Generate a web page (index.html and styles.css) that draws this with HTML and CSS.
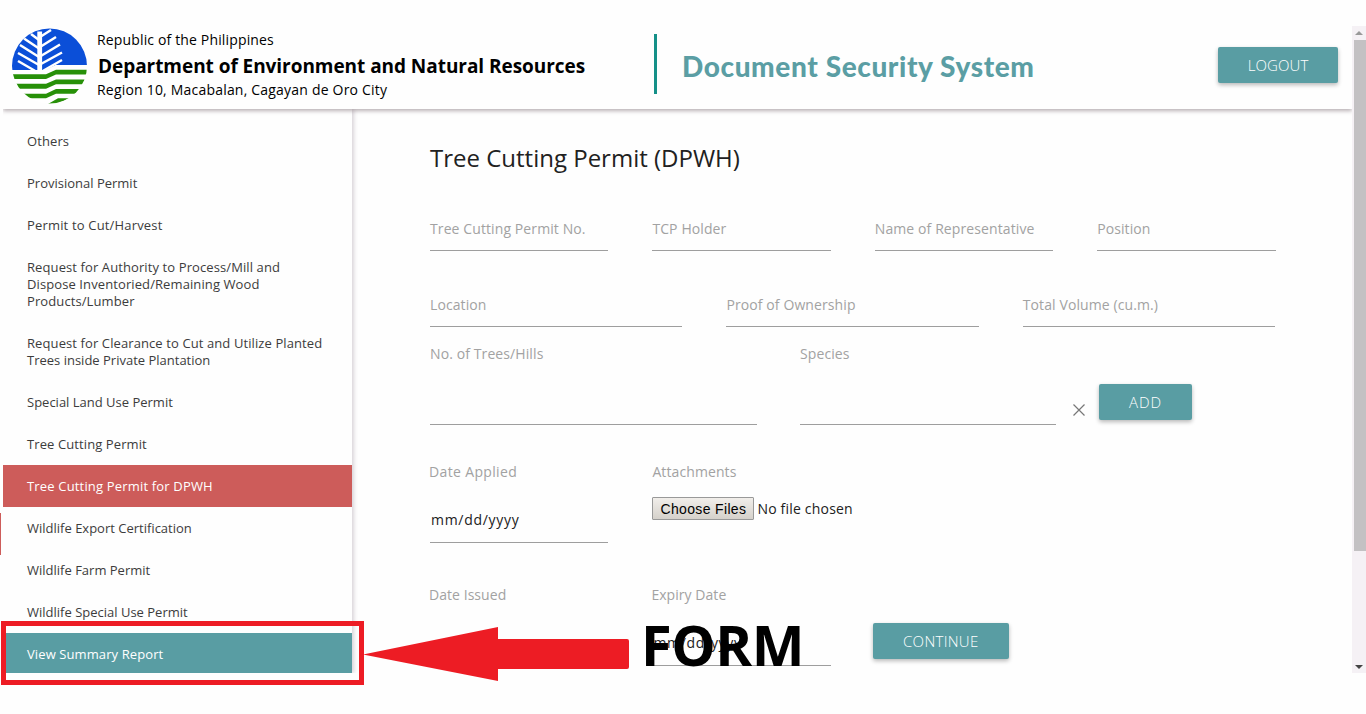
FILE: index.html
```html
<!DOCTYPE html>
<html lang="en">
<head>
<meta charset="utf-8">
<title>Document Security System</title>
<link rel="stylesheet" href="styles.css">
</head>
<body>
<div class="page">
  <div class="app">
    <header class="header">
      <svg class="logo" viewBox="0 0 76 76">
        <defs><clipPath id="disc"><circle cx="37.500" cy="38" r="37.500"/></clipPath></defs>
        <g clip-path="url(#disc)">
          <path fill="#0b4fd8" d="M0 0h76v37H44l-10 5H0z"/>
          <path fill="#fff" d="M0 42h34l10-5h32v39H0z"/>
          <path fill="none" stroke="#fff" stroke-width="4.800" d="M27.700 3.500v40"/>
          <path fill="none" stroke="#fff" stroke-width="2.500" d="M28 9l11-7M28 19l16-10M28 28.500l20-12M28 36.500l22-12M29 44l21-12M27 12l-8-6M27 20.500L12 10.500M27 29L8 17M27 37L6 25M25 44L6 33"/>
          <path fill="#279008" d="M0 46.300h34l10-4.500h32v4.700H44L34 51H0zM0 55.700h34l10-4.300h32v4.900H44l-10 4.400H0zM0 65.700h34L44 61h32v4.700H44l-10 4.600H0zM36 76l10-5.700h12L44 76z"/>
        </g>
      </svg>
      <div class="agency">
        <div class="agency-line republic">Republic of the Philippines</div>
        <div class="agency-name">Department of Environment and Natural Resources</div>
        <div class="agency-line">Region 10, Macabalan, Cagayan de Oro City</div>
      </div>
      <div class="system">Document Security System</div>
      <button class="btn logout">LOGOUT</button>
    </header>
    <div class="body">
      <nav class="sidebar">
        <a>Others</a>
        <a class="tight">Provisional Permit</a>
        <a class="wide">Permit to Cut/Harvest</a>
        <a>Request for Authority to Process/Mill and<br>Dispose Inventoried/Remaining Wood<br>Products/Lumber</a>
        <a>Request for Clearance to Cut and Utilize Planted<br><span class="tight">Trees inside Private Plantation</span></a>
        <a class="tight">Special Land Use Permit</a>
        <a>Tree Cutting Permit</a>
        <a class="active wide">Tree Cutting Permit for DPWH</a>
        <a class="tight">Wildlife Export Certification</a>
        <a class="tight">Wildlife Farm Permit</a>
        <a class="tight">Wildlife Special Use Permit</a>
        <a class="summary">View Summary Report</a>
      </nav>
      <main class="main">
        <h1>Tree Cutting Permit (DPWH)</h1>
        <div class="row quarters">
          <div class="field"><label>Tree Cutting Permit No.</label></div>
          <div class="field"><label>TCP Holder</label></div>
          <div class="field"><label>Name of Representative</label></div>
          <div class="field"><label>Position</label></div>
        </div>
        <div class="row thirds">
          <div class="field"><label>Location</label></div>
          <div class="field"><label>Proof of Ownership</label></div>
          <div class="field"><label>Total Volume (cu.m.)</label></div>
        </div>
        <div class="row trees">
          <div class="field"><label>No. of Trees/Hills</label></div>
          <div class="field"><label>Species</label></div>
          <svg class="remove" viewBox="0 0 12 12"><path d="M.5.5l11 11M11.5.5l-11 11"/></svg>
          <button class="btn add">ADD</button>
        </div>
        <div class="row quarters applied">
          <div class="field"><label class="shift">Date Applied</label><div class="date">mm/dd/yyyy</div></div>
          <div class="attach"><label>Attachments</label>
            <div class="file"><button>Choose Files</button><span class="nofile">No file chosen</span></div></div>
        </div>
        <div class="row quarters issued">
          <div class="field bare"><label class="shift snug">Date Issued</label></div>
          <div class="field"><label class="shift snug">Expiry Date</label><div class="date">mm/dd/yyyy</div></div>
          <button class="btn continue">CONTINUE</button>
        </div>
      </main>
    </div>
  </div>
  <div class="scrollbar"><i class="up"></i><div class="thumb"></div><i class="down"></i></div>
  <i class="edge"></i>
  <div class="frame"></div>
  <svg class="arrow" viewBox="0 0 266 54"><path d="M0 27.500L135 0v12h129q2 0 2 2v26q0 2-2 2H135v12z"/></svg>
  <div class="callout">FORM</div>
</div>
</body>
</html>
```
FILE: styles.css
```css
* { box-sizing: border-box; }
body { margin: 0; background: #fff; font-family: "Open Sans", "Noto Sans", sans-serif; color: #212121; }
.page { position: relative; width: 1366px; height: 714px; overflow: hidden; display: flex; background: #fefefe; }
.app { width: 1352px; height: 673px; overflow: hidden; }
.header { position: relative; z-index: 1; height: 109px; margin-left: 3px; display: flex; align-items: flex-start; background: #fefefe; box-shadow: 0 2px 4px rgba(80, 60, 70, .4); clip-path: inset(0 0 -8px 0); }
.logo { width: 76px; height: 76px; margin: 28px 9px 0; }
.agency { width: 557px; padding-top: 28px; color: #000; white-space: nowrap; }
.agency-line { font-size: 14px; line-height: 24px; letter-spacing: .2px; }
.republic { letter-spacing: .15px; }
.agency-name { font-size: 19px; font-weight: 700; line-height: 26px; padding-left: 1px; letter-spacing: -.05px; position: relative; top: 1px; }
.system { height: 60px; margin-top: 34px; padding-left: 25px; border-left: 3px solid #159088; font: 900 28px/65px Lato, sans-serif; letter-spacing: .6px; color: #5b9ea4; white-space: nowrap; }
.btn { height: 36px; padding: 0; border: 0; border-radius: 2px; background: #599da3; color: #fff; font: 300 15px/36px "Open Sans", sans-serif; letter-spacing: .3px; box-shadow: 0 2px 4px rgba(0, 0, 0, .28); white-space: nowrap; }
.logout { width: 120px; margin: 47px 14px 0 auto; letter-spacing: .1px; }
.body { display: flex; height: 564px; padding-left: 3px; }
.sidebar { width: 349px; flex: none; padding-top: 11px; background: #fefefe; box-shadow: 2px 0 4px rgba(80, 60, 80, .22); clip-path: inset(0 -8px 0 0); }
.sidebar a { display: block; padding: 12.5px 24px; font-size: 13px; line-height: 17px; letter-spacing: .1px; color: #3c3c3c; white-space: nowrap; }
.sidebar .active { background: #cd5c5a; color: #fff; }
.sidebar .summary { background: #599da3; color: #fff; }
.sidebar .wide { letter-spacing: .17px; }
.sidebar .tight { letter-spacing: 0; }
.main { padding: 31px 0 0 78px; }
h1 { margin: 0; font-size: 24px; line-height: 36px; font-weight: 400; white-space: nowrap; }
.row { display: grid; column-gap: 44px; }
.quarters { grid-template-columns: repeat(4, 178.4px); margin-top: 43px; }
.thirds { grid-template-columns: repeat(3, 252.4px); margin-top: 44px; }
.trees { grid-template-columns: 327px 256px 12px 93px; column-gap: 0; height: 81px; margin-top: 17px; }
.trees .field:nth-child(2) { margin-left: 43px; margin-right: -43px; }
.remove { width: 12px; height: 12px; margin: 60px 0 0 60px; overflow: visible; fill: none; stroke: #777; stroke-width: 1.2; }
.add { width: 93px; margin: 40px 0 0 74px; letter-spacing: .9px; }
.field { border-bottom: 1px solid #9e9e9e; padding-bottom: 11px; }
label { display: block; font-size: 14px; line-height: 20px; letter-spacing: .1px; color: #a2a2a2; white-space: nowrap; }
.shift { margin-left: -1px; letter-spacing: .35px; }
.snug { letter-spacing: .05px; }
.applied { margin-top: 37px; height: 81px; }
.issued { margin-top: 42px; height: 81px; }
.date { padding: 28px 0 0 1px; font-size: 14px; line-height: 20px; letter-spacing: .7px; }
.bare { border-color: transparent; }
.file { display: flex; align-items: center; margin-top: 15px; height: 23px; white-space: nowrap; font-size: 14px; letter-spacing: .2px; }
.file button { flex: none; width: 102px; height: 23px; padding: 0; border: 1px solid #999; border-radius: 1px; background: linear-gradient(#f1eeea, #d5d1cb); font: 14px/20px "Liberation Sans", sans-serif; letter-spacing: .35px; color: #000; }
.nofile { margin-left: 3px; }
.continue { width: 136px; margin: 38px 0 0 -2px; }
.scrollbar { width: 14px; height: 647px; margin-top: 26px; display: flex; flex-direction: column; align-items: center; background: #f5f1f5; }
.up { margin-top: 5px; border: 4px solid transparent; border-top: 0; border-bottom: 4px solid #999; }
.thumb { width: 12px; height: 511px; margin: 5px 0 0 2px; background: #c3c1c3; }
.down { margin-top: auto; margin-bottom: 4px; border: 4px solid transparent; border-bottom: 0; border-top: 4px solid #444; }
.edge { position: absolute; left: 0; top: 513px; width: 1px; height: 42px; background: #cd5c5a; }
.frame { position: absolute; z-index: 2; left: 1px; top: 621px; width: 363px; height: 64px; border: 5px solid #ed1c24; }
.arrow { position: absolute; left: 363px; top: 627px; width: 266px; height: 54px; fill: #ed1c24; }
.callout { position: absolute; left: 641px; top: 606px; font: 700 56px/76px "Open Sans", sans-serif; letter-spacing: -.5px; color: #000; }
```
